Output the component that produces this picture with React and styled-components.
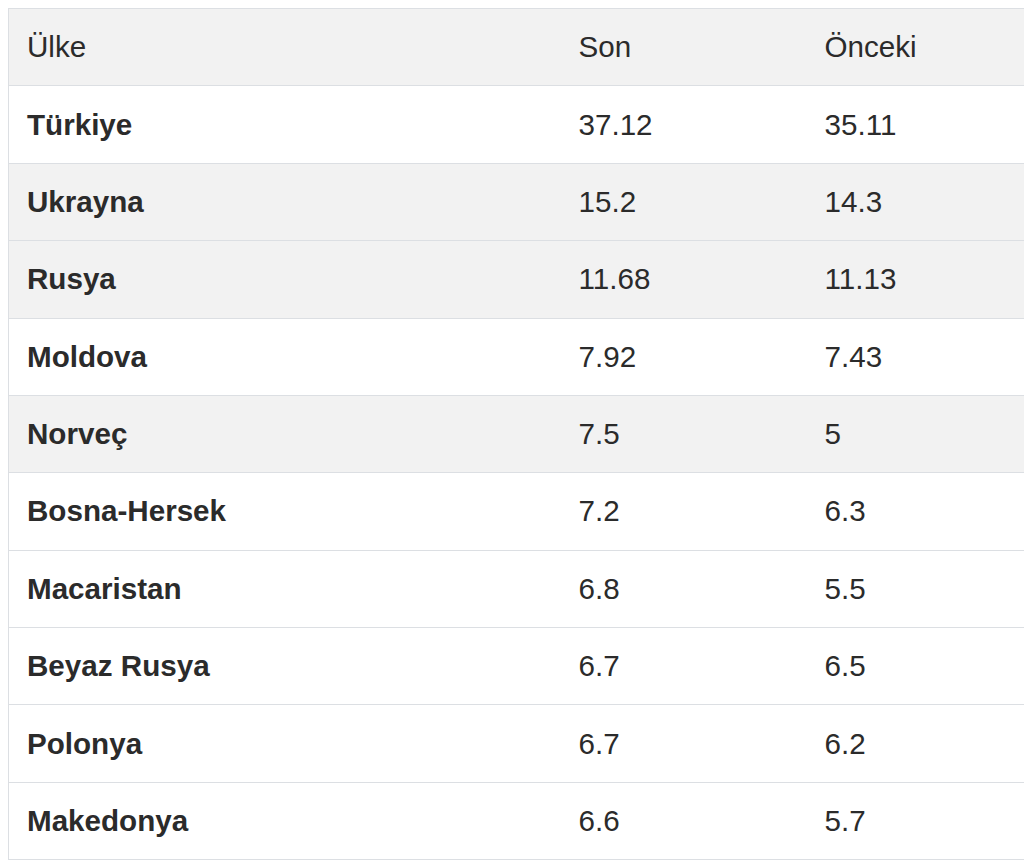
import React from 'react'
import styled, { createGlobalStyle } from 'styled-components'

const GlobalStyle = createGlobalStyle`
  html, body {
    margin: 0;
    background: #fff;
    overflow: hidden;
  }
  body {
    padding: 8px 0 0 8px;
    font-family: "Liberation Sans", Arial, Helvetica, sans-serif;
    color: #2b2b2b;
  }
`

const Table = styled.table`
  width: 1040px;
  table-layout: fixed;
  border-collapse: collapse;
  border: 1px solid #dcdfe3;
  font-size: 29.6px;
  line-height: 42px;
`

const HeadCell = styled.th`
  box-sizing: border-box;
  text-align: left;
  font-weight: 400;
  padding: 17.2px 18px;
  background: #f2f2f2;
  width: ${props => props.w || 'auto'};
`

const Row = styled.tr`
  background: ${props => (props.shaded ? '#f2f2f2' : '#fff')};
  border-top: 1px solid #dcdfe3;
`

const Cell = styled.td`
  padding: 17.2px 18px;
  font-weight: ${props => (props.bold ? 700 : 400)};
`

const rows = [
  ['Türkiye', '37.12', '35.11', false],
  ['Ukrayna', '15.2', '14.3', true],
  ['Rusya', '11.68', '11.13', true],
  ['Moldova', '7.92', '7.43', false],
  ['Norveç', '7.5', '5', true],
  ['Bosna-Hersek', '7.2', '6.3', false],
  ['Macaristan', '6.8', '5.5', false],
  ['Beyaz Rusya', '6.7', '6.5', false],
  ['Polonya', '6.7', '6.2', false],
  ['Makedonya', '6.6', '5.7', false],
]

export default function App() {
  return (
    <>
      <GlobalStyle />
      <Table>
        <thead>
          <tr>
            <HeadCell w="552px">Ülke</HeadCell>
            <HeadCell w="246px">Son</HeadCell>
            <HeadCell>Önceki</HeadCell>
          </tr>
        </thead>
        <tbody>
          {rows.map(([country, last, prev, shaded]) => (
            <Row key={country} shaded={shaded}>
              <Cell bold>{country}</Cell>
              <Cell>{last}</Cell>
              <Cell>{prev}</Cell>
            </Row>
          ))}
        </tbody>
      </Table>
    </>
  )
}
